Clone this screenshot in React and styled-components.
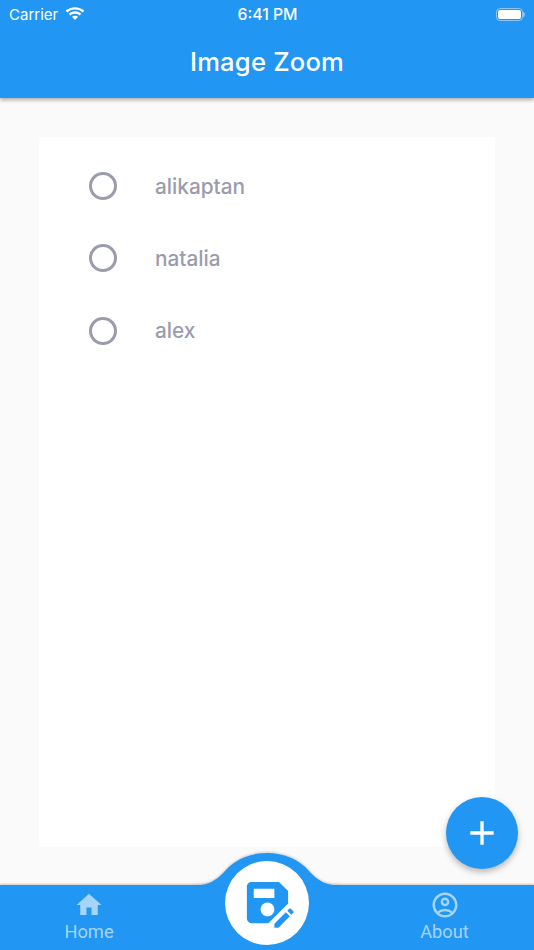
import React from 'react';
import styled, { createGlobalStyle } from 'styled-components';
import { MdHome, MdOutlineAccountCircle, MdSaveAs, MdAdd } from 'react-icons/md';

const GlobalStyle = createGlobalStyle`
  html, body { margin: 0; padding: 0; background: #fafafa; }
  * { box-sizing: border-box; }
`;

const Page = styled.div`
  position: relative;
  width: 534px;
  height: 950px;
  display: flex;
  flex-direction: column;
  overflow: hidden;
  background: #fafafa;
  font-family: Inter, "Liberation Sans", sans-serif;
`;

const AppBar = styled.header`
  position: relative;
  z-index: 2;
  height: 98px;
  flex: none;
  background: #2196f3;
  color: #fff;
  box-shadow: 0 2px 4px rgba(0, 0, 0, 0.32);
`;

const StatusBar = styled.div`
  height: 28px;
  padding: 0 8px 0 9px;
  display: grid;
  grid-template-columns: 1fr auto 1fr;
  align-items: center;
`;

const Carrier = styled.div`
  display: flex;
  align-items: center;
  gap: 7px;
  font-size: 15px;
`;

const Clock = styled.div`
  font-size: 15.8px;
  font-weight: 500;
`;

const Battery = styled.div`
  justify-self: end;
  position: relative;
  width: 27px;
  height: 13px;
  margin-right: 3px;
  padding: 1px;
  border: 1px solid rgba(255, 255, 255, 0.45);
  border-radius: 4px;

  &::before {
    content: '';
    display: block;
    height: 100%;
    background: #fff;
    border-radius: 2px;
  }

  &::after {
    content: '';
    position: absolute;
    right: -3px;
    top: 3px;
    width: 2px;
    height: 5px;
    background: rgba(255, 255, 255, 0.45);
    border-radius: 0 2px 2px 0;
  }
`;

const Title = styled.h1`
  margin: 0;
  height: 70px;
  padding-bottom: 4px;
  display: flex;
  align-items: center;
  justify-content: center;
  font-size: 25.6px;
  font-weight: 500;
  letter-spacing: 0.2px;
`;

const Body = styled.main`
  flex: 1;
  padding: 39px 39px 38px;
  display: flex;
`;

const Card = styled.ul`
  flex: 1;
  margin: 0;
  padding: 13px 0 0 50px;
  list-style: none;
  background: #fff;
`;

const Option = styled.li`
  height: 72.3px;
  display: flex;
  align-items: center;
  gap: 38px;
  color: #9a9cae;
  font-size: 20.8px;
  font-weight: 500;
`;

const Radio = styled.span`
  width: 28px;
  height: 28px;
  border: 3px solid #9a9cae;
  border-radius: 50%;
`;

const Fab = styled.button`
  position: absolute;
  left: 446px;
  top: 797px;
  z-index: 3;
  width: 72px;
  height: 72px;
  padding: 0;
  border: 0;
  border-radius: 50%;
  display: flex;
  align-items: center;
  justify-content: center;
  color: #fff;
  background: #2196f3;
  box-shadow: 0 3px 6px rgba(0, 0, 0, 0.28);
`;

const BottomBar = styled.nav`
  position: relative;
  height: 65px;
  flex: none;
  display: flex;
  justify-content: space-between;
  padding: 0 42.5px 0 42px;
  background: #2196f3;
  box-shadow: 0 -1px 2px rgba(0, 0, 0, 0.2);
`;

const Bump = styled.svg`
  position: absolute;
  left: 167px;
  top: -32px;
  filter: drop-shadow(0 -1px 1px rgba(0, 0, 0, 0.18));
`;

const CenterButton = styled.button`
  position: absolute;
  left: 225px;
  top: -24.5px;
  width: 84px;
  height: 84px;
  padding: 0;
  border: 0;
  border-radius: 50%;
  display: flex;
  align-items: center;
  justify-content: center;
  color: #2196f3;
  background: #fff;
`;

const Tab = styled.a`
  position: relative;
  width: 94px;
  display: flex;
  flex-direction: column;
  align-items: center;
  padding-top: 5px;
  color: rgba(255, 255, 255, 0.6);
  font-family: Roboto, "Liberation Sans", sans-serif;
  font-size: 18.3px;
  line-height: 23px;
`;

function WifiIcon() {
  return (
    <svg width="20" height="15" viewBox="0 0 19 14" fill="#fff">
      <path d="M9.5 2.2c2.8 0 5.3 1 7.3 2.8l1.6-1.7C16 1.2 12.9 0 9.5 0S3 1.2.6 3.3L2.2 5c2-1.8 4.500-2.800 7.300-2.800z" />
      <path d="M9.5 6.300c1.700 0 3.200.6 4.400 1.700l1.600-1.700C13.900 4.900 11.800 4 9.500 4s-4.400.9-6 2.300L5.100 8c1.200-1.100 2.700-1.700 4.400-1.700z" />
      <path d="M9.5 8.100c-1.100 0-2.100.4-2.900 1.100l2.900 3.100 2.900-3.100c-.8-.7-1.800-1.100-2.900-1.100z" />
    </svg>
  );
}

const options = ['alikaptan', 'natalia', 'alex'];

const App = () => {
  return (
    <Page>
      <GlobalStyle />
      <AppBar>
        <StatusBar>
          <Carrier>Carrier <WifiIcon /></Carrier>
          <Clock>6:41 PM</Clock>
          <Battery />
        </StatusBar>
        <Title>Image Zoom</Title>
      </AppBar>
      <Body>
        <Card>
          {options.map((name) => (
            <Option key={name}>
              <Radio />
              {name}
            </Option>
          ))}
        </Card>
      </Body>
      <Fab aria-label="Add"><MdAdd size={40} /></Fab>
      <BottomBar>
        <Bump width="200" height="34" viewBox="0 0 200 34">
          <path
            d="M20 33 C40 33 48 29 58 18 C68 6 84 0 100 0 C116 0 132 6 142 18 C152 29 160 33 180 33 Z"
            fill="#2196f3"
          />
        </Bump>
        <Tab>
          <MdHome size={30} />
          Home
        </Tab>
        <CenterButton aria-label="Save"><MdSaveAs size={55} /></CenterButton>
        <Tab>
          <MdOutlineAccountCircle size={30} />
          About
        </Tab>
      </BottomBar>
    </Page>
  );
};

export default App;
